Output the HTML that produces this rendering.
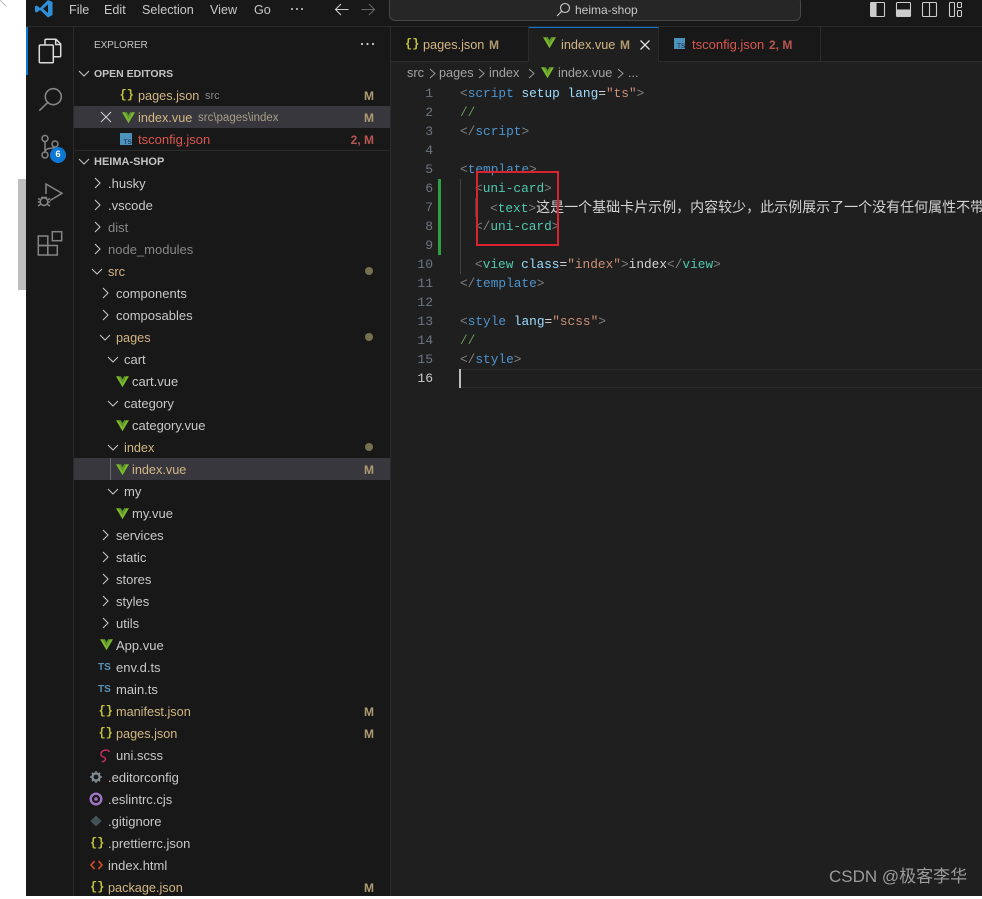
<!DOCTYPE html>
<html><head><meta charset="utf-8"><title>heima-shop</title>
<style>
html,body{margin:0;padding:0;background:#fff}
body{position:relative;width:982px;height:896px;overflow:hidden;font:13px "Liberation Sans","Noto Sans CJK SC",sans-serif;color:#c8c8c8}
div,span,svg{position:absolute;white-space:nowrap}
.r{left:74px;width:316px;height:22px;line-height:22px}
.t{top:1px}
.m{color:#d3b684;font-size:12.7px}.d{color:#878787}.e{color:#d9564f}
.b{font-weight:bold;font-size:11px;color:#c4c4c4}
.s{right:16px;top:1px;font-weight:bold;font-size:12px;color:#b09a72}
.dot{left:291px;top:7px;width:8px;height:8px;border-radius:50%;background:#77704f}
.ic{top:5px;width:13px;height:13px}
.ch{top:3px;width:16px;height:16px;fill:none;stroke:#c4c4c4;stroke-width:1.1}
.br{font:bold 12px/22px "Liberation Mono",monospace;color:#c3c33b;top:0}
.l{left:391px;width:42px;text-align:right;height:19px;font:13px/19px "Liberation Mono",monospace;color:#6e7681}
.c{left:460px;height:19px;font:12.8px/19px "Liberation Mono","Noto Sans CJK SC",monospace;color:#808080}
.c i{font-style:normal}
.g{color:#4e94ce}.a{color:#9cdcfe}.v{color:#ce9178}.w{color:#d4d4d4}.n{color:#4ec9b0}.o{color:#6a9955}
.top{top:2px;line-height:16px;font-size:12.6px;color:#c8c8c8}
.tab{top:27px;height:34px;line-height:34px;background:#181818}
.tab span{top:1px}
.tab .br{line-height:34px;top:0}
.cr{font-size:12.7px;line-height:16px;top:65px;color:#a3a3a3}
</style></head>
<body>
<svg width="0" height="0" style="left:0;top:0">
<defs>
<symbol id="v" viewBox="0 0 16 16"><path d="M0 1.500h3.400L8 9.600l4.600-8.100H16L8 15z" fill="#7cb82f"/><path d="M3.400 1.500h2.600L8 5l2-3.500h2.600L8 9.600z" fill="#5f9a2c"/></symbol>
<symbol id="right" viewBox="0 0 16 16"><path d="M6 3l5 5-5 5"/></symbol>
<symbol id="down" viewBox="0 0 16 16"><path d="M3 6l5 5 5-5"/></symbol>
</defs>
</svg>

<!-- left chrome -->
<svg style="left:0;top:0" width="8" height="8"><path d="M0 0l6 6" stroke="#bbb" fill="none"/></svg>
<div style="left:18px;top:179px;width:8px;height:111px;background:#bfbfbf"></div>

<!-- base -->
<div style="left:26px;top:0;width:956px;height:896px;background:#181818"></div>
<div style="left:26px;top:26px;width:956px;height:1px;background:#2b2b2b"></div>
<div style="left:73px;top:27px;width:1px;height:869px;background:#2b2b2b"></div>
<div style="left:390px;top:27px;width:1px;height:869px;background:#2b2b2b"></div>
<div style="left:391px;top:61px;width:591px;height:835px;background:#1f1f1f"></div>

<!-- title bar -->
<svg style="left:35px;top:0" width="18" height="18" viewBox="0 0 18 18"><path d="M13 0l4.500 2v13L13 17.500 5 10 1.700 12.600 0 11.500V6.500l1.700-1 3.300 2.500z" fill="#2f8fd8"/><path d="M13 4.500L8 8.800l5 4.200z" fill="#181818"/></svg>
<span class="top" style="left:69px">File</span>
<span class="top" style="left:104px">Edit</span>
<span class="top" style="left:142px">Selection</span>
<span class="top" style="left:210px">View</span>
<span class="top" style="left:254px">Go</span>
<svg style="left:290px;top:6px" width="14" height="6"><circle cx="2" cy="3" r="1" fill="#ccc"/><circle cx="7" cy="3" r="1" fill="#ccc"/><circle cx="12" cy="3" r="1" fill="#ccc"/></svg>
<svg style="left:334px;top:2px" width="15" height="15" fill="none" stroke="#ccc" stroke-width="1.1"><path d="M1.500 7.500h13M7 2L1.500 7.500 7 13"/></svg>
<svg style="left:361px;top:2px" width="15" height="15" fill="none" stroke="#666" stroke-width="1.1"><path d="M.5 7.500h13M8 2l5.500 5.500L8 13"/></svg>
<div style="left:389px;top:-4px;width:410px;height:23px;background:#262626;border:1px solid #474747;border-radius:6px"></div>
<svg style="left:556px;top:2px" width="15" height="15" fill="none" stroke="#ccc" stroke-width="1.1"><circle cx="9" cy="6" r="4.500"/><path d="M5.800 9.200L1 14"/></svg>
<span class="top" style="left:575px;color:#c8c8c8;font-size:12px">heima-shop</span>
<svg style="left:870px;top:2px" width="92" height="16" fill="none" stroke="#ccc" stroke-width="1.1">
<rect x=".5" y=".5" width="14" height="14" rx="1"/><rect x="1" y="1" width="5" height="13" fill="#ccc"/>
<rect x="26.500" y=".5" width="14" height="14" rx="1"/><rect x="27" y="8" width="13" height="6" fill="#ccc"/>
<rect x="52.500" y=".5" width="14" height="14" rx="1"/><path d="M59.500 1v13"/>
<rect x="79.500" y=".5" width="5" height="14" rx="1"/><rect x="87.500" y=".5" width="4" height="5" rx="1"/><rect x="87.500" y="8.500" width="4" height="6" rx="1"/>
</svg>

<!-- activity bar -->
<div style="left:26px;top:27px;width:2px;height:48px;background:#0a78d4"></div>
<svg style="left:37px;top:37px" width="26" height="28" fill="none" stroke="#dcdcdc" stroke-width="1.500" stroke-linejoin="round"><path d="M8 8V3.300q0-1 1-1h10L23.700 7v11.700q0 1-1 1H16.300"/><rect x="2.300" y="8" width="14" height="17.700" rx="1"/><path d="M18.700 2.300V7.500h5"/></svg>
<svg style="left:37px;top:85px" width="26" height="28" fill="none" stroke="#858585" stroke-width="1.600"><circle cx="16.300" cy="11.700" r="8"/><path d="M10.500 17.700L2.300 25.700"/></svg>
<svg style="left:38px;top:133px" width="24" height="28" fill="none" stroke="#858585" stroke-width="1.500"><circle cx="7" cy="5.500" r="3"/><circle cx="7" cy="22" r="3"/><circle cx="17" cy="11" r="3"/><path d="M7 8.500V19M7 19c0-5 10-3 10-5"/></svg>
<div style="left:50px;top:147px;width:16px;height:16px;border-radius:50%;background:#0a78d4;color:#fff;font-size:9.500px;font-weight:bold;line-height:16px;text-align:center">6</div>
<svg style="left:37px;top:181px" width="26" height="28" fill="none" stroke="#858585" stroke-width="1.500"><path d="M9 13V3L25 12.300 13 19.500"/><circle cx="7" cy="20.700" r="3.800"/><path d="M1 17.500l3 1.500M.8 21h2.500M1 25l3-2M13 17.500l-3 1.500M13.200 21h-2.500M13 25l-3-2M4 16.500h6"/></svg>
<svg style="left:37px;top:230px" width="26" height="28" fill="none" stroke="#858585" stroke-width="1.500"><rect x="1.300" y="6" width="9.500" height="9.500"/><rect x="1.300" y="15.500" width="9.500" height="9.500"/><rect x="10.800" y="15.500" width="9.500" height="9.500"/><rect x="15.300" y="1.700" width="9.400" height="9"/></svg>

<!-- sidebar headings -->
<span style="left:94px;top:38px;line-height:16px;font-size:10px;letter-spacing:-.1px;color:#c4c4c4">EXPLORER</span>
<svg style="left:360px;top:41px" width="15" height="6"><circle cx="2" cy="3" r="1.100" fill="#ccc"/><circle cx="7.500" cy="3" r="1.100" fill="#ccc"/><circle cx="13" cy="3" r="1.100" fill="#ccc"/></svg>

<div class="r" style="top:62px"><svg class="ch" style="left:2px"><use href="#down"/></svg><span class="t b" style="left:20px;font-size:10.500px">OPEN EDITORS</span></div>
<div class="r" style="top:84px"><span class="br" style="left:45.500px">{}</span><span class="t m" style="left:64px">pages.json</span><span class="t d" style="left:131px;font-size:11px">src</span><span class="s">M</span></div>
<div class="r" style="top:106px;background:#37373d"><svg style="left:26px;top:5px" width="12" height="12" fill="none" stroke="#ccc" stroke-width="1.100"><path d="M1 1l10 10M11 1L1 11"/></svg><svg class="ic" style="left:47.500px"><use href="#v"/></svg><span class="t m" style="left:64px">index.vue</span><span class="t" style="left:124px;font-size:11.500px;color:#a89f88">src\pages\index</span><span class="s">M</span></div>
<div class="r" style="top:128px"><svg style="left:46px;top:5px" width="12" height="12"><rect width="12" height="12" fill="#4d91bd"/><text x="3.500" y="11" font-size="6.500" fill="#123">TS</text></svg><span class="t e" style="left:64px">tsconfig.json</span><span class="s" style="color:#b8564f">2, M</span></div>
<div style="left:74px;top:150px;width:316px;height:1px;background:#2b2b2b"></div>
<div class="r" style="top:150px"><svg class="ch" style="left:2px"><use href="#down"/></svg><span class="t b" style="left:20px">HEIMA-SHOP</span></div>

<!-- tree -->
<div class="r" style="top:172px"><svg class="ch" style="left:15px"><use href="#right"/></svg><span class="t" style="left:34px">.husky</span></div>
<div class="r" style="top:194px"><svg class="ch" style="left:15px"><use href="#right"/></svg><span class="t" style="left:34px">.vscode</span></div>
<div class="r" style="top:216px"><svg class="ch" style="left:15px"><use href="#right"/></svg><span class="t d" style="left:34px">dist</span></div>
<div class="r" style="top:238px"><svg class="ch" style="left:15px"><use href="#right"/></svg><span class="t d" style="left:34px">node_modules</span></div>
<div class="r" style="top:260px"><svg class="ch" style="left:15px"><use href="#down"/></svg><span class="t m" style="left:34px">src</span><span class="dot"></span></div>
<div class="r" style="top:282px"><svg class="ch" style="left:23px"><use href="#right"/></svg><span class="t" style="left:42px">components</span></div>
<div class="r" style="top:304px"><svg class="ch" style="left:23px"><use href="#right"/></svg><span class="t" style="left:42px">composables</span></div>
<div class="r" style="top:326px"><svg class="ch" style="left:23px"><use href="#down"/></svg><span class="t m" style="left:42px">pages</span><span class="dot"></span></div>
<div class="r" style="top:348px"><svg class="ch" style="left:31px"><use href="#down"/></svg><span class="t" style="left:50px">cart</span></div>
<div class="r" style="top:370px"><svg class="ic" style="left:42px"><use href="#v"/></svg><span class="t" style="left:58px">cart.vue</span></div>
<div class="r" style="top:392px"><svg class="ch" style="left:31px"><use href="#down"/></svg><span class="t" style="left:50px">category</span></div>
<div class="r" style="top:414px"><svg class="ic" style="left:42px"><use href="#v"/></svg><span class="t" style="left:58px">category.vue</span></div>
<div class="r" style="top:436px"><svg class="ch" style="left:31px"><use href="#down"/></svg><span class="t m" style="left:50px">index</span><span class="dot"></span></div>
<div class="r" style="top:458px;background:#37373d"><div style="left:36px;top:0;width:1px;height:22px;background:#6a6a6a"></div><svg class="ic" style="left:42px"><use href="#v"/></svg><span class="t m" style="left:58px">index.vue</span><span class="s">M</span></div>
<div class="r" style="top:480px"><svg class="ch" style="left:31px"><use href="#down"/></svg><span class="t" style="left:50px">my</span></div>
<div class="r" style="top:502px"><svg class="ic" style="left:42px"><use href="#v"/></svg><span class="t" style="left:58px">my.vue</span></div>
<div class="r" style="top:524px"><svg class="ch" style="left:23px"><use href="#right"/></svg><span class="t" style="left:42px">services</span></div>
<div class="r" style="top:546px"><svg class="ch" style="left:23px"><use href="#right"/></svg><span class="t" style="left:42px">static</span></div>
<div class="r" style="top:568px"><svg class="ch" style="left:23px"><use href="#right"/></svg><span class="t" style="left:42px">stores</span></div>
<div class="r" style="top:590px"><svg class="ch" style="left:23px"><use href="#right"/></svg><span class="t" style="left:42px">styles</span></div>
<div class="r" style="top:612px"><svg class="ch" style="left:23px"><use href="#right"/></svg><span class="t" style="left:42px">utils</span></div>
<div class="r" style="top:634px"><svg class="ic" style="left:25.500px;top:4px"><use href="#v"/></svg><span class="t" style="left:42px">App.vue</span></div>
<div class="r" style="top:656px"><span class="t" style="left:24px;font-weight:bold;font-size:10px;color:#5a93b8">TS</span><span class="t" style="left:42px">env.d.ts</span></div>
<div class="r" style="top:678px"><span class="t" style="left:24px;font-weight:bold;font-size:10px;color:#5a93b8">TS</span><span class="t" style="left:42px">main.ts</span></div>
<div class="r" style="top:700px"><span class="br" style="left:24.500px">{}</span><span class="t m" style="left:42px">manifest.json</span><span class="s">M</span></div>
<div class="r" style="top:722px"><span class="br" style="left:24.500px">{}</span><span class="t m" style="left:42px">pages.json</span><span class="s">M</span></div>
<div class="r" style="top:744px"><svg style="left:25px;top:5px" width="12" height="14" fill="none" stroke="#c6305f" stroke-width="1.400"><path d="M10.500 3C9 0 3 .5 2 4.500s5 3 4.500 5.500-3 3-3.500 2"/></svg><span class="t" style="left:42px">uni.scss</span></div>
<div class="r" style="top:766px"><svg style="left:16px;top:5px" width="12" height="12"><circle cx="6" cy="6" r="3.600" fill="none" stroke="#7f8b93" stroke-width="2.400"/><path d="M6 0v12M0 6h12M1.800 1.800l8.400 8.400M10.200 1.800l-8.400 8.400" stroke="#7f8b93" stroke-width="1.400" stroke-dasharray="2 8 2"/></svg><span class="t" style="left:34px">.editorconfig</span></div>
<div class="r" style="top:788px"><svg style="left:15px;top:4px" width="14" height="14"><circle cx="7" cy="7" r="5.300" fill="none" stroke="#a074c4" stroke-width="2.400"/><circle cx="7" cy="7" r="1.800" fill="#a074c4"/></svg><span class="t" style="left:34px">.eslintrc.cjs</span></div>
<div class="r" style="top:810px"><svg style="left:16px;top:5px" width="12" height="12"><path d="M6 .5L11.500 6 6 11.500.5 6z" fill="#41535b"/></svg><span class="t" style="left:34px">.gitignore</span></div>
<div class="r" style="top:832px"><span class="br" style="left:16px">{}</span><span class="t" style="left:34px">.prettierrc.json</span></div>
<div class="r" style="top:854px"><svg style="left:16px;top:6px" width="13" height="10" fill="none" stroke="#e44d26" stroke-width="1.500"><path d="M4.500 1L1 5l3.500 4M8.500 1L12 5 8.500 9"/></svg><span class="t" style="left:34px">index.html</span></div>
<div class="r" style="top:876px"><span class="br" style="left:16px">{}</span><span class="t m" style="left:34px">package.json</span><span class="s">M</span></div>

<!-- tabs -->
<div style="left:391px;top:61px;width:591px;height:1px;background:#2b2b2b"></div>
<div class="tab" style="left:391px;width:137px;border-right:1px solid #2b2b2b"><span class="br" style="left:14px">{}</span><span class="m" style="left:32px">pages.json</span><span style="left:98px;font-weight:bold;font-size:12px;color:#b09a72">M</span></div>
<div class="tab" style="left:529px;width:129px;background:#1f1f1f;border-top:1px solid #0a78d4;height:34px;border-right:1px solid #2b2b2b"><svg class="ic" style="left:14px;top:8px"><use href="#v"/></svg><span class="m" style="left:32px;top:0">index.vue</span><span style="left:91px;top:0;font-weight:bold;font-size:12px;color:#b09a72">M</span><svg style="left:111px;top:12px" width="10" height="10" fill="none" stroke="#ddd" stroke-width="1.300"><path d="M.5.5l9 9M9.500.5l-9 9"/></svg></div>
<div class="tab" style="left:659px;width:161px;border-right:1px solid #2b2b2b"><svg style="left:15px;top:11px" width="11" height="11"><rect width="11" height="11" fill="#4d91bd"/><text x="3" y="10" font-size="6.500" fill="#123">TS</text></svg><span class="e" style="left:33px">tsconfig.json</span><span style="left:110px;font-weight:bold;font-size:12px;color:#b8564f">2, M</span></div>

<!-- breadcrumb -->
<span class="cr" style="left:407px">src</span>
<svg style="left:428px;top:68px;width:9px;height:11px" fill="none" stroke="#9a9a9a" viewBox="0 0 9 11"><path d="M2 1l5 4.500L2 10"/></svg>
<span class="cr" style="left:439px">pages</span>
<svg style="left:477px;top:68px;width:9px;height:11px" fill="none" stroke="#9a9a9a" viewBox="0 0 9 11"><path d="M2 1l5 4.500L2 10"/></svg>
<span class="cr" style="left:489px">index</span>
<svg style="left:527px;top:68px;width:9px;height:11px" fill="none" stroke="#9a9a9a" viewBox="0 0 9 11"><path d="M2 1l5 4.500L2 10"/></svg>
<svg style="left:541px;top:66px;width:13px;height:13px"><use href="#v"/></svg>
<span class="cr" style="left:558px">index.vue</span>
<svg style="left:616px;top:68px;width:9px;height:11px" fill="none" stroke="#9a9a9a" viewBox="0 0 9 11"><path d="M2 1l5 4.500L2 10"/></svg>
<span class="cr" style="left:628px">...</span>

<!-- editor decorations -->
<div style="left:438px;top:179px;width:3px;height:76px;background:#2ea043"></div>
<div style="left:460px;top:179px;width:1px;height:95px;background:#404040"></div>
<div style="left:475px;top:198px;width:1px;height:19px;background:#404040"></div>
<div style="left:459px;top:369px;width:523px;height:17px;border-top:1px solid #2b2b2b;border-bottom:1px solid #2b2b2b"></div>
<div style="left:459px;top:369px;width:2px;height:19px;background:#bdbdbd"></div>

<!-- line numbers -->
<div class="l" style="top:84px">1</div>
<div class="l" style="top:103px">2</div>
<div class="l" style="top:122px">3</div>
<div class="l" style="top:141px">4</div>
<div class="l" style="top:160px">5</div>
<div class="l" style="top:179px">6</div>
<div class="l" style="top:198px">7</div>
<div class="l" style="top:217px">8</div>
<div class="l" style="top:236px">9</div>
<div class="l" style="top:255px">10</div>
<div class="l" style="top:274px">11</div>
<div class="l" style="top:293px">12</div>
<div class="l" style="top:312px">13</div>
<div class="l" style="top:331px">14</div>
<div class="l" style="top:350px">15</div>
<div class="l" style="top:369px;color:#ccc">16</div>

<!-- code -->
<div class="c" style="top:84px">&lt;<i class="g">script</i> <i class="a">setup</i> <i class="a">lang</i><i class="w">=</i><i class="v">"ts"</i>&gt;</div>
<div class="c" style="top:103px"><i class="o">//</i></div>
<div class="c" style="top:122px">&lt;/<i class="g">script</i>&gt;</div>
<div class="c" style="top:160px">&lt;<i class="g">template</i>&gt;</div>
<div class="c" style="top:179px;left:475px">&lt;<i class="n">uni-card</i>&gt;</div>
<div class="c" style="top:198px;left:490px">&lt;<i class="n">text</i>&gt;<i class="w" style="font-size:14px;font-family:'Noto Sans CJK SC',sans-serif">这是一个基础卡片示例，内容较少，此示例展示了一个没有任何属性不带</i></div>
<div class="c" style="top:217px;left:475px">&lt;/<i class="n">uni-card</i>&gt;</div>
<div class="c" style="top:255px;left:475px">&lt;<i class="n">view</i> <i class="a">class</i><i class="w">=</i><i class="v">"index"</i>&gt;<i class="w">index</i>&lt;/<i class="n">view</i>&gt;</div>
<div class="c" style="top:274px">&lt;/<i class="g">template</i>&gt;</div>
<div class="c" style="top:312px">&lt;<i class="g">style</i> <i class="a">lang</i><i class="w">=</i><i class="v">"scss"</i>&gt;</div>
<div class="c" style="top:331px"><i class="o">//</i></div>
<div class="c" style="top:350px">&lt;/<i class="g">style</i>&gt;</div>

<!-- annotation -->
<div style="left:476px;top:171px;width:79px;height:71px;border:2px solid #d9232e"></div>

<!-- watermark -->
<span style="left:829px;top:866px;line-height:22px;font-size:17px;color:#9c9c9c">CSDN @极客李华</span>
</body></html>
